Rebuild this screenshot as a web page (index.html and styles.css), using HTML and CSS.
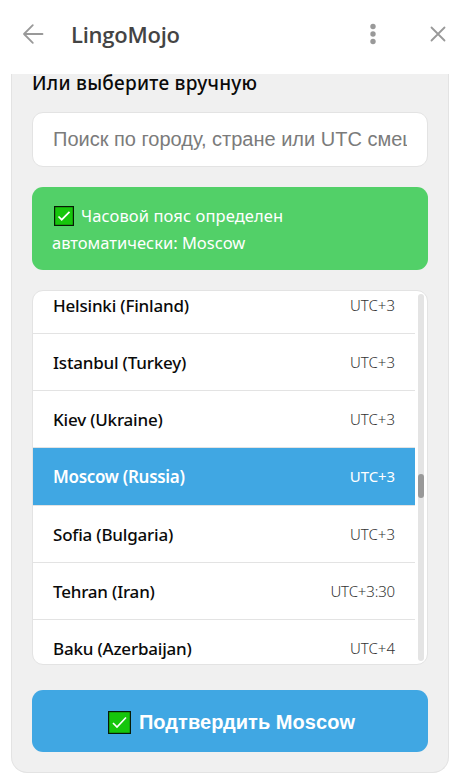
FILE: index.html
```html
<!DOCTYPE html>
<html lang="ru">
<head>
<meta charset="utf-8">
<title>LingoMojo</title>
<link rel="stylesheet" href="styles.css">
</head>
<body>
<header class="topbar">
  <svg class="back" width="22" height="22" viewBox="0 0 22 22"><path d="M20.5 11H2M10.8 2.2L2 11l8.8 8.8"/></svg>
  <h1 class="title">LingoMojo</h1>
  <svg class="more" width="8" height="22" viewBox="0 0 8 22"><circle cx="4" cy="3.5" r="2.7"/><circle cx="4" cy="11" r="2.7"/><circle cx="4" cy="18.5" r="2.7"/></svg>
  <svg class="close" width="16" height="16" viewBox="0 0 16 16"><path d="M1.5 1.5l13 13M14.5 1.5l-13 13"/></svg>
</header>
<main class="card">
  <h2 class="heading">Или выберите вручную</h2>
  <input class="search" type="text" placeholder="Поиск по городу, стране или UTC смещению">
  <div class="notice">
    <div><svg class="check" width="20" height="20" viewBox="0 0 20 20"><rect x=".6" y=".6" width="18.8" height="18.8"/><path d="M4.5 10.5l3.2 3.2 7.8-7.8"/></svg><span class="notice-first">Часовой пояс определен</span></div>
    <div class="notice-second">автоматически: Moscow</div>
  </div>
  <div class="list">
    <div class="rows">
      <div class="row"><span class="city">Helsinki (Finland)</span><span class="utc">UTC+3</span></div>
      <div class="row"><span class="city">Istanbul (Turkey)</span><span class="utc">UTC+3</span></div>
      <div class="row"><span class="city">Kiev (Ukraine)</span><span class="utc">UTC+3</span></div>
      <div class="row selected"><span class="city">Moscow (Russia)</span><span class="utc">UTC+3</span></div>
      <div class="row"><span class="city">Sofia (Bulgaria)</span><span class="utc">UTC+3</span></div>
      <div class="row"><span class="city">Tehran (Iran)</span><span class="utc half">UTC+3:30</span></div>
      <div class="row"><span class="city">Baku (Azerbaijan)</span><span class="utc">UTC+4</span></div>
    </div>
    <div class="track"><div class="thumb"></div></div>
  </div>
  <button class="confirm"><svg class="check" width="23" height="23" viewBox="0 0 23 23"><rect x=".6" y=".6" width="21.8" height="21.8"/><path d="M5 12l4 4 9-9.5"/></svg><span>Подтвердить Moscow</span></button>
</main>
</body>
</html>
```
FILE: styles.css
```css
* { box-sizing: border-box; }
body {
  margin: 0;
  height: 777px;
  overflow: hidden;
  background: #fff;
  color: #0a0a0a;
  font-family: "Noto Sans", "Open Sans", sans-serif;
}
.topbar {
  display: flex;
  align-items: center;
  height: 74px;
  padding: 0 14px 6px 22px;
}
.back, .close { fill: none; stroke: #999; stroke-width: 1.8; stroke-linecap: round; stroke-linejoin: round; }
.title {
  margin: 0 auto 0 27px;
  font: 600 22px/30px "Open Sans", sans-serif;
  letter-spacing: -0.25px;
  color: #444;
}
.more { fill: #999; margin-right: 53px; }
.card {
  margin: 0 11px;
  width: 438px;
  height: 699px;
  padding: 0 20px;
  background: #f0f0f0;
  border: 1px solid #e3e3e3;
  border-top: 0;
  border-radius: 0 0 16px 16px;
}
.heading {
  margin: 0;
  height: 38px;
  font-size: 19px;
  line-height: 18px;
  font-weight: 500;
  letter-spacing: 0.26px;
  white-space: nowrap;
}
.search {
  display: block;
  width: 396px;
  height: 55px;
  padding: 0 20px;
  border: 1px solid #e3e3e3;
  border-radius: 11px;
  background: #fff;
  font: 20px "Liberation Sans", sans-serif;
}
.search::placeholder { color: #7b7b7b; opacity: 1; }
.notice {
  height: 83px;
  margin-top: 20px;
  padding: 15px 20px;
  border-radius: 11px;
  background: #52d068;
  color: #fff;
  font-size: 16.5px;
  line-height: 27px;
  white-space: nowrap;
}
.notice-first { letter-spacing: 0.1px; }
.check rect { fill: #16c60c; stroke: #071b06; stroke-width: 1.2; }
.check path { fill: none; stroke: #fff; stroke-width: 1.7; }
.notice .check { margin: 0 7px 0 2px; vertical-align: -4px; }
.list {
  display: flex;
  width: 396px;
  height: 375px;
  margin-top: 20px;
  overflow: hidden;
  border: 1px solid #e3e3e3;
  border-radius: 11px;
  background: #fff;
}
.rows { width: 382px; margin-top: -14px; }
.row {
  display: flex;
  align-items: center;
  justify-content: space-between;
  height: 57px;
  padding: 0 20px;
  border-bottom: 1px solid #e3e3e3;
  white-space: nowrap;
}
.city { font-size: 17px; font-weight: 500; letter-spacing: -0.2px; }
.utc { font-size: 15px; font-weight: 300; color: #333; }
.half { letter-spacing: -0.15px; }
.selected { height: 58px; background: #40a7e3; background-clip: padding-box; color: #fff; }
.selected .city { font-weight: 600; letter-spacing: -0.3px; }
.selected .utc { color: #fff; font-weight: 400; letter-spacing: -0.1px; margin-top: -1px; }
.track {
  width: 6px;
  height: 367px;
  margin: 3px 0 0 3px;
  padding-top: 180px;
  border-radius: 3px;
  background: #e4e4e4;
}
.thumb { height: 24px; border-radius: 3px; background: #999; }
.confirm {
  display: flex;
  align-items: center;
  justify-content: center;
  width: 396px;
  height: 62px;
  margin-top: 25px;
  padding: 2px 0 0 3px;
  gap: 8px;
  border: 0;
  border-radius: 11px;
  background: #40a7e3;
  color: #fff;
  font: bold 20px "Liberation Sans", sans-serif;
  letter-spacing: 0.05px;
}
```
